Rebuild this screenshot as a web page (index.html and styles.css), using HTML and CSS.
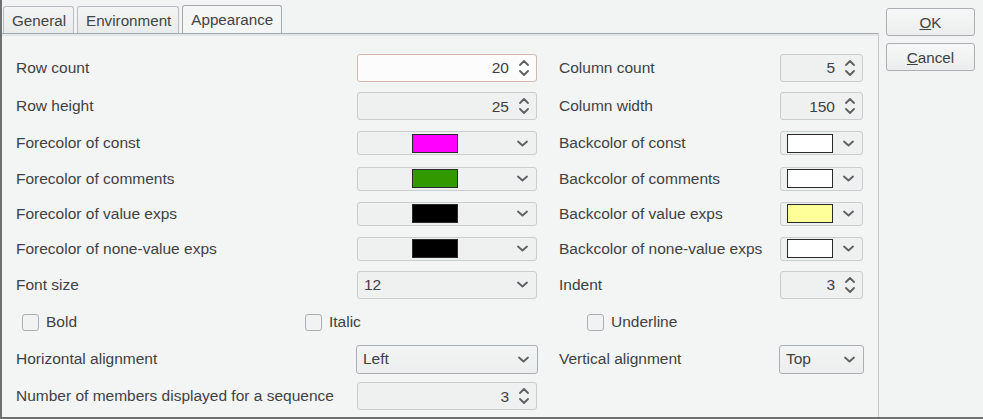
FILE: index.html
```html
<!DOCTYPE html>
<html>
<head>
<meta charset="utf-8">
<link rel="stylesheet" href="styles.css">
</head>
<body>
<div class="window">
  <div class="main">
    <div class="tabs">
      <div class="tab">General</div>
      <div class="tab">Environment</div>
      <div class="tab active">Appearance</div>
    </div>
    <div class="panel">
      <div class="form">
        <div class="label">Row count</div>
        <div class="field spin focus"><span class="val">20</span><span class="arrows"><svg width="10" height="18" viewBox="0 0 10 18"><polyline points="1,6 5,2 9,6"/><polyline points="1,12 5,16 9,12"/></svg></span></div>
        <div class="label label2">Column count</div>
        <div class="field spin"><span class="val">5</span><span class="arrows"><svg width="10" height="18" viewBox="0 0 10 18"><polyline points="1,6 5,2 9,6"/><polyline points="1,12 5,16 9,12"/></svg></span></div>

        <div class="label">Row height</div>
        <div class="field spin"><span class="val">25</span><span class="arrows"><svg width="10" height="18" viewBox="0 0 10 18"><polyline points="1,6 5,2 9,6"/><polyline points="1,12 5,16 9,12"/></svg></span></div>
        <div class="label label2">Column width</div>
        <div class="field spin"><span class="val">150</span><span class="arrows"><svg width="10" height="18" viewBox="0 0 10 18"><polyline points="1,6 5,2 9,6"/><polyline points="1,12 5,16 9,12"/></svg></span></div>

        <div class="label">Forecolor of const</div>
        <div class="field color"><span class="swatchbox"><span class="swatch magenta"></span></span><span class="drop"><svg width="11" height="7" viewBox="0 0 11 7"><polyline points="1,1.5 5.5,5.5 10,1.5"/></svg></span></div>
        <div class="label label2">Backcolor of const</div>
        <div class="field color"><span class="swatchbox"><span class="swatch white"></span></span><span class="drop"><svg width="11" height="7" viewBox="0 0 11 7"><polyline points="1,1.5 5.5,5.5 10,1.5"/></svg></span></div>

        <div class="label">Forecolor of comments</div>
        <div class="field color"><span class="swatchbox"><span class="swatch green"></span></span><span class="drop"><svg width="11" height="7" viewBox="0 0 11 7"><polyline points="1,1.5 5.5,5.5 10,1.5"/></svg></span></div>
        <div class="label label2">Backcolor of comments</div>
        <div class="field color"><span class="swatchbox"><span class="swatch white"></span></span><span class="drop"><svg width="11" height="7" viewBox="0 0 11 7"><polyline points="1,1.5 5.5,5.5 10,1.5"/></svg></span></div>

        <div class="label">Forecolor of value exps</div>
        <div class="field color"><span class="swatchbox"><span class="swatch black"></span></span><span class="drop"><svg width="11" height="7" viewBox="0 0 11 7"><polyline points="1,1.5 5.5,5.5 10,1.5"/></svg></span></div>
        <div class="label label2">Backcolor of value exps</div>
        <div class="field color"><span class="swatchbox"><span class="swatch yellow"></span></span><span class="drop"><svg width="11" height="7" viewBox="0 0 11 7"><polyline points="1,1.5 5.5,5.5 10,1.5"/></svg></span></div>

        <div class="label">Forecolor of none-value exps</div>
        <div class="field color"><span class="swatchbox"><span class="swatch black"></span></span><span class="drop"><svg width="11" height="7" viewBox="0 0 11 7"><polyline points="1,1.5 5.5,5.5 10,1.5"/></svg></span></div>
        <div class="label label2">Backcolor of none-value exps</div>
        <div class="field color"><span class="swatchbox"><span class="swatch white"></span></span><span class="drop"><svg width="11" height="7" viewBox="0 0 11 7"><polyline points="1,1.5 5.5,5.5 10,1.5"/></svg></span></div>

        <div class="label">Font size</div>
        <div class="field combo"><span class="text">12</span><span class="drop"><svg width="11" height="7" viewBox="0 0 11 7"><polyline points="1,1.5 5.5,5.5 10,1.5"/></svg></span></div>
        <div class="label label2">Indent</div>
        <div class="field spin"><span class="val">3</span><span class="arrows"><svg width="10" height="18" viewBox="0 0 10 18"><polyline points="1,6 5,2 9,6"/><polyline points="1,12 5,16 9,12"/></svg></span></div>

        <div class="checks">
          <label class="check"><span class="box"></span>Bold</label>
          <label class="check"><span class="box"></span>Italic</label>
          <label class="check"><span class="box"></span>Underline</label>
        </div>

        <div class="label">Horizontal alignment</div>
        <div class="field combo strong"><span class="text">Left</span><span class="drop"><svg width="11" height="7" viewBox="0 0 11 7"><polyline points="1,1.5 5.5,5.5 10,1.5"/></svg></span></div>
        <div class="label label2">Vertical alignment</div>
        <div class="field combo strong"><span class="text">Top</span><span class="drop"><svg width="11" height="7" viewBox="0 0 11 7"><polyline points="1,1.5 5.5,5.5 10,1.5"/></svg></span></div>

        <div class="label">Number of members displayed for a sequence</div>
        <div class="field spin"><span class="val">3</span><span class="arrows"><svg width="10" height="18" viewBox="0 0 10 18"><polyline points="1,6 5,2 9,6"/><polyline points="1,12 5,16 9,12"/></svg></span></div>
      </div>
    </div>
  </div>
  <div class="buttons">
    <button class="btn"><u>O</u>K</button>
    <button class="btn"><u>C</u>ancel</button>
  </div>
</div>
</body>
</html>
```

FILE: styles.css
```css
* { box-sizing: border-box; }
html, body { margin: 0; padding: 0; }
body {
  background: #f2f3f3;
  font-family: "Liberation Sans", Arial, sans-serif;
  font-size: 15.5px;
  color: #3f4244;
}
.window {
  width: 983px;
  height: 419px;
  display: flex;
  border-left: 2px solid #6f7070;
  border-bottom: 2px solid #6f7070;
  background: #f2f3f3;
}
.main {
  width: 877px;
  display: flex;
  flex-direction: column;
}
.tabs {
  display: flex;
  align-items: flex-end;
  gap: 3px;
  padding-left: 1px;
  height: 33px;
  font-size: 15.2px;
}
.tab {
  height: 27px;
  padding: 0 7px 0 8px;
  display: flex;
  align-items: center;
  border: 1px solid #b8bec2;
  border-bottom: none;
  border-radius: 3px 3px 0 0;
  background: linear-gradient(#f3f4f4, #e9ebeb);
  color: #414446;
}
.tab.active {
  height: 28px;
  background: #f4f5f5;
  border-color: #a4abaf;
  padding: 0 8px 0 8px;
}
.panel {
  flex: 1;
  border-top: 1px solid #a3aaae;
  border-right: 1px solid #c3c8cb;
  box-shadow: inset 0 2px 0 #e4e7e8;
  background: #f3f4f4;
  padding: 14px 0 0 14px;
}
.form {
  display: grid;
  grid-template-columns: 341px 180px 243px 83px;
  grid-template-rows: 39px 38px 36px 35px 35px 35px 37px 38px 36px 38px;
  align-items: center;
}
.label { white-space: nowrap; }
.label2 { padding-left: 22px; }
.field {
  display: flex;
  align-items: center;
  border: 1px solid #c8cdd0;
  border-radius: 3px;
  background: #eff0f0;
}
.spin { height: 28px; }
.spin.focus {
  background: #fcfcfc;
  border-color: #d3b9ad;
}
.spin .val {
  flex: 1;
  text-align: right;
  padding-top: 1px;
}
.arrows {
  width: 27px;
  display: flex;
  justify-content: center;
  align-items: center;
  padding-left: 2px;
}
svg polyline {
  fill: none;
  stroke: #5d6062;
  stroke-width: 1.8;
  stroke-linecap: round;
  stroke-linejoin: round;
}
.color { height: 24px; }
.swatchbox {
  flex: 1;
  display: flex;
  justify-content: center;
  align-items: center;
}
.swatch {
  width: 46px;
  height: 19px;
  border: 1px solid #2a2a2a;
}
.magenta { background: #ff00ff; }
.green { background: #339900; }
.black { background: #000000; }
.white { background: #ffffff; }
.yellow { background: #ffff99; }
.drop {
  width: 24px;
  display: flex;
  justify-content: center;
  align-items: center;
  padding-right: 4px;
}
.combo { height: 28px; }
.combo .text {
  flex: 1;
  padding-left: 6px;
}
.combo.strong {
  height: 29px;
  margin: 0 -1px;
  border-color: #a9b0b4;
  background: linear-gradient(#f3f4f4, #eceeee);
}
.checks {
  grid-column: 1 / -1;
  display: grid;
  grid-template-columns: 283px 282px 200px;
  padding-left: 6px;
}
.check {
  display: flex;
  align-items: center;
  gap: 7px;
}
.box {
  width: 17px;
  height: 17px;
  border: 1px solid #a9afb3;
  border-radius: 3px;
  background: #f1f2f2;
}
.buttons {
  display: flex;
  flex-direction: column;
  gap: 7px;
  padding: 8px 0 0 7px;
}
.btn {
  width: 89px;
  height: 28px;
  font-family: "Liberation Sans", Arial, sans-serif;
  font-size: 15.2px;
  color: #3f4244;
  border: 1px solid #a9afb3;
  border-radius: 3px;
  background: linear-gradient(#f6f7f7, #eceeee);
  padding: 0;
}
```
